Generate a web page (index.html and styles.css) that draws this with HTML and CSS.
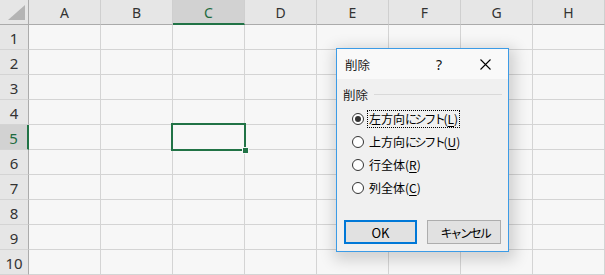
FILE: index.html
```html
<!DOCTYPE html>
<html lang="ja">
<head>
<meta charset="utf-8">
<link rel="stylesheet" href="styles.css">
</head>
<body>
<div class="sheet">
  <div class="grid">
    <div class="hd corner"><span class="tri"></span></div>
    <div class="hd col">A</div>
    <div class="hd col">B</div>
    <div class="hd col sel-col">C</div>
    <div class="hd col">D</div>
    <div class="hd col">E</div>
    <div class="hd col">F</div>
    <div class="hd col">G</div>
    <div class="hd col">H</div>
  </div>
  <div class="rows" id="rows"></div>
  <div class="selection"><span class="handle"></span></div>

  <div class="dialog">
    <div class="titlebar">
      <span class="title">削除</span>
      <span class="help">?</span>
      <span class="close">
        <svg width="11" height="11" viewBox="0 0 11 11"><path d="M0.5 0.5L10.5 10.5M10.5 0.5L0.5 10.5" stroke="#000" stroke-width="1.1" fill="none"/></svg>
      </span>
    </div>
    <div class="dbody">
      <div class="group"><span>削除</span><span class="rule"></span></div>
      <div class="opts">
        <div class="opt"><span class="radio on"></span><span class="lbl focus">左方向<span class="kana">にシフト</span>(<u>L</u>)</span></div>
        <div class="opt"><span class="radio"></span><span class="lbl">上方向<span class="kana">にシフト</span>(<u>U</u>)</span></div>
        <div class="opt"><span class="radio"></span><span class="lbl">行全体(<u>R</u>)</span></div>
        <div class="opt"><span class="radio"></span><span class="lbl">列全体(<u>C</u>)</span></div>
      </div>
      <div class="buttons">
        <button class="btn ok">OK</button>
        <button class="btn"><span class="kana">キャンセル</span></button>
      </div>
    </div>
  </div>
</div>
<script>
  var rows = document.getElementById('rows');
  var html = '';
  for (var i = 1; i <= 10; i++) {
    html += '<div class="grid"><div class="hd row' + (i === 5 ? ' sel-row' : '') + '">' + i + '</div>';
    for (var j = 0; j < 8; j++) html += '<div class="cell"></div>';
    html += '</div>';
  }
  rows.innerHTML = html;
</script>
</body>
</html>
```
FILE: styles.css
```css
* { box-sizing: border-box; }
html, body { margin: 0; padding: 0; }
body {
  width: 605px;
  height: 275px;
  overflow: hidden;
  background: #f7f7f7;
  font-family: "Noto Sans CJK JP", "Noto Sans", sans-serif;
}
.sheet { position: relative; width: 605px; height: 275px; }
.grid {
  display: grid;
  grid-template-columns: 29px repeat(8, 72px);
  height: 25px;
}
.hd {
  background: #e6e6e6;
  border-right: 1px solid #cfcfcf;
  border-bottom: 1px solid #cfcfcf;
  color: #333;
  display: flex;
  align-items: center;
  justify-content: center;
  font-family: "Noto Sans", "Noto Sans CJK JP", sans-serif;
  font-size: 14px;
}
.col { border-bottom: 1px solid #ababab; padding-top: 1px; }
.corner { border-bottom: 1px solid #ababab; border-right: 1px solid #ababab; position: relative; }
.tri {
  position: absolute;
  right: 3px;
  bottom: 4px;
  width: 0; height: 0;
  border-left: 17px solid transparent;
  border-bottom: 15px solid #b4b4b4;
}
.row { border-right: 1px solid #ababab; border-bottom: 1px solid #d4d4d4; font-size: 15px; padding-top: 1px; }
.sel-col { background: #d2d2d2; border-bottom: 2px solid #217346; color: #1d6b40; }
.sel-row { background: #d2d2d2; border-right: 2px solid #217346; color: #1d6b40; }
.cell {
  border-right: 1px solid #d4d4d4;
  border-bottom: 1px solid #d4d4d4;
}
.selection {
  position: absolute;
  left: 171px;
  top: 123px;
  width: 75px;
  height: 28px;
  border: 2px solid #217346;
}
.handle {
  position: absolute;
  right: -5px;
  bottom: -5px;
  width: 7px;
  height: 7px;
  background: #217346;
  border: 1px solid #f7f7f7;
}
.dialog {
  position: absolute;
  left: 336px;
  top: 48px;
  width: 173px;
  height: 204px;
  border: 1px solid #3c9be6;
  background: #f0f0f0;
  box-shadow: 2px 4px 14px 4px rgba(0,0,0,0.16);
  font-size: 12px;
  color: #000;
}
.titlebar {
  height: 30px;
  background: #f9f9f9;
  display: flex;
  align-items: center;
  padding-left: 8px;
}
.title { flex: 1; font-size: 12.5px; color: #222; }
.help { width: 10px; text-align: center; margin-right: 36px; font-family: "Noto Sans", sans-serif; font-size: 14px; color: #111; }
.close { display: flex; width: 11px; margin-right: 17px; }
.dbody { padding: 7px 6px 0 6px; }
.group { display: flex; align-items: center; gap: 6px; height: 16px; color: #222; font-size: 12.5px; }
.rule { flex: 1; height: 1px; background: #d9d9d9; margin-right: 0px; }
.opts { display: flex; flex-direction: column; gap: 5px; margin-top: 8px; padding-left: 9px; }
.opt { display: flex; align-items: center; height: 18px; gap: 3px; }
.radio {
  width: 12px; height: 12px;
  border: 1px solid #333;
  border-radius: 50%;
  background: #fff;
  display: flex; align-items: center; justify-content: center;
}
.radio.on::after {
  content: "";
  width: 6px; height: 6px; border-radius: 50%; background: #333;
}
.lbl { padding: 0 1px; line-height: 16px; border: 1px dotted transparent; font-size: 12px; }
.lbl.focus { border-color: #000; }
.lbl u { text-decoration-thickness: 1px; text-underline-offset: 2px; }
.kana { letter-spacing: -2.4px; }
.buttons { display: flex; justify-content: space-between; margin-top: 23px; padding: 0 1px; }
.btn {
  width: 74px; height: 24px;
  background: #e1e1e1;
  border: 1px solid #adadad;
  font-family: "Noto Sans CJK JP", "Noto Sans", sans-serif;
  font-size: 12px;
  color: #000;
  padding: 0;
}
.btn .kana { letter-spacing: -2.2px; margin-right: -2px; }
.btn.ok { width: 73px; border: 2px solid #0078d7; font-size: 13px; }
```
